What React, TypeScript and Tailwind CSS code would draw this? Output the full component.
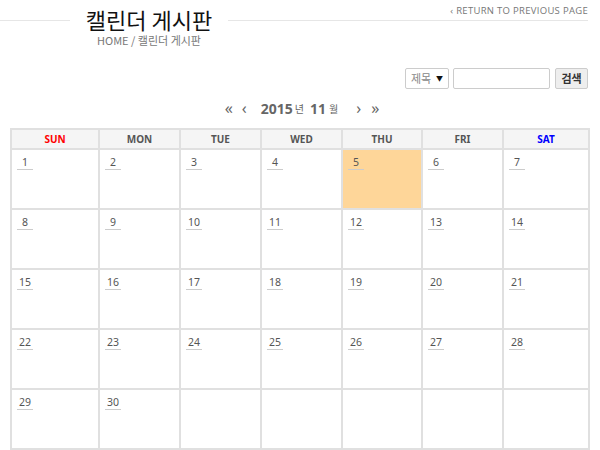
import React from 'react';

const days = ['SUN', 'MON', 'TUE', 'WED', 'THU', 'FRI', 'SAT'];
const widths = ['w-[88px]', 'w-[81px]', 'w-[81px]', 'w-[81px]', 'w-[80px]', 'w-[81px]', 'w-[86px]'];

// November 2015 starts on a Sunday
const weeks: (number | null)[][] = [];
for (let w = 0; w < 5; w++) {
  const row: (number | null)[] = [];
  for (let d = 0; d < 7; d++) {
    const n = w * 7 + d + 1;
    row.push(n <= 30 ? n : null);
  }
  weeks.push(row);
}

const App: React.FC = () => {
  return (
    <div className="w-[600px] h-[450px] bg-white overflow-hidden font-['Noto_Sans','Noto_Sans_CJK_KR',sans-serif] text-[#444]">
      {/* title */}
      <div className="relative h-[48px]">
        <div className="flex items-start">
          <div className="w-[70px] mt-[20px] border-t border-[#e6e6e6]"></div>
          <div className="w-[158px] flex flex-col items-center">
            <h1 className="mt-[6px] text-[22px] leading-[26px] text-[#111] font-['Noto_Sans_CJK_KR',sans-serif]">캘린더 게시판</h1>
            <div className="mt-[2px] text-[11px] leading-[13px] text-[#777] font-['Noto_Sans_CJK_KR',sans-serif]">HOME / 캘린더 게시판</div>
          </div>
          <div className="flex-1 mt-[20px] mr-[12px] border-t border-[#e6e6e6]"></div>
        </div>
        <a className="absolute right-[12px] top-[4px] text-[9.5px] leading-[14px] tracking-[0.3px] text-[#777] font-['Open_Sans',sans-serif]">
          &lsaquo; RETURN TO PREVIOUS PAGE
        </a>
      </div>

      {/* search */}
      <div className="flex justify-end items-center gap-[4px] pr-[12px] mt-[20px]">
        <div className="w-[44px] h-[21px] border border-[#ccc] rounded-[2px] flex items-center justify-between px-[5px] font-['Noto_Sans_CJK_KR',sans-serif]">
          <span className="text-[11px] text-[#888]">제목</span>
          <span className="text-[7px] text-[#111]">▼</span>
        </div>
        <div className="w-[97px] h-[21px] border border-[#ccc] rounded-[2px]"></div>
        <button className="ml-[1px] w-[33px] h-[21px] border border-[#ccc] rounded-[2px] bg-[#eee] text-[11px] font-bold text-[#333] font-['Noto_Sans_CJK_KR',sans-serif]">검색</button>
      </div>

      {/* month nav */}
      <div className="flex items-center justify-center h-[20px] mt-[9px] ml-[4px] text-[#666]">
        <span className="text-[16px] leading-none">«</span>
        <span className="ml-[9px] text-[16px] leading-none">‹</span>
        <span className="ml-[14px] text-[14px] font-bold">2015</span>
        <span className="ml-[2px] text-[10px] font-['Noto_Sans_CJK_KR',sans-serif]">년</span>
        <span className="ml-[6px] text-[14px] font-bold">11</span>
        <span className="ml-[3px] text-[10px] font-['Noto_Sans_CJK_KR',sans-serif]">월</span>
        <span className="ml-[18px] text-[16px] leading-none">›</span>
        <span className="ml-[10px] text-[16px] leading-none">»</span>
      </div>

      {/* calendar */}
      <table className="ml-[10px] mt-[10px] border-collapse table-fixed">
        <thead>
          <tr>
            {days.map((d, i) => (
              <th
                key={d}
                className={`${widths[i]} h-[20px] p-0 border-2 border-[#e0e0e0] bg-[#f5f5f5] text-[10px] font-bold ${i === 0 ? 'text-[#f00]' : i === 6 ? 'text-[#00f]' : 'text-[#555]'}`}
              >
                {d}
              </th>
            ))}
          </tr>
        </thead>
        <tbody>
          {weeks.map((row, w) => (
            <tr key={w}>
              {row.map((n, i) => (
                <td
                  key={i}
                  className={`h-[60px] p-0 align-top border-2 border-[#e0e0e0] ${n === 5 ? 'bg-[#fed699]' : 'bg-white'}`}
                >
                  {n !== null && (
                    <div className="ml-[5px] mt-[5px] w-[16px] text-center text-[10.5px] leading-[14px] text-[#555] border-b border-[#ccc]">
                      {n}
                    </div>
                  )}
                </td>
              ))}
            </tr>
          ))}
        </tbody>
      </table>
    </div>
  );
};

export default App;
